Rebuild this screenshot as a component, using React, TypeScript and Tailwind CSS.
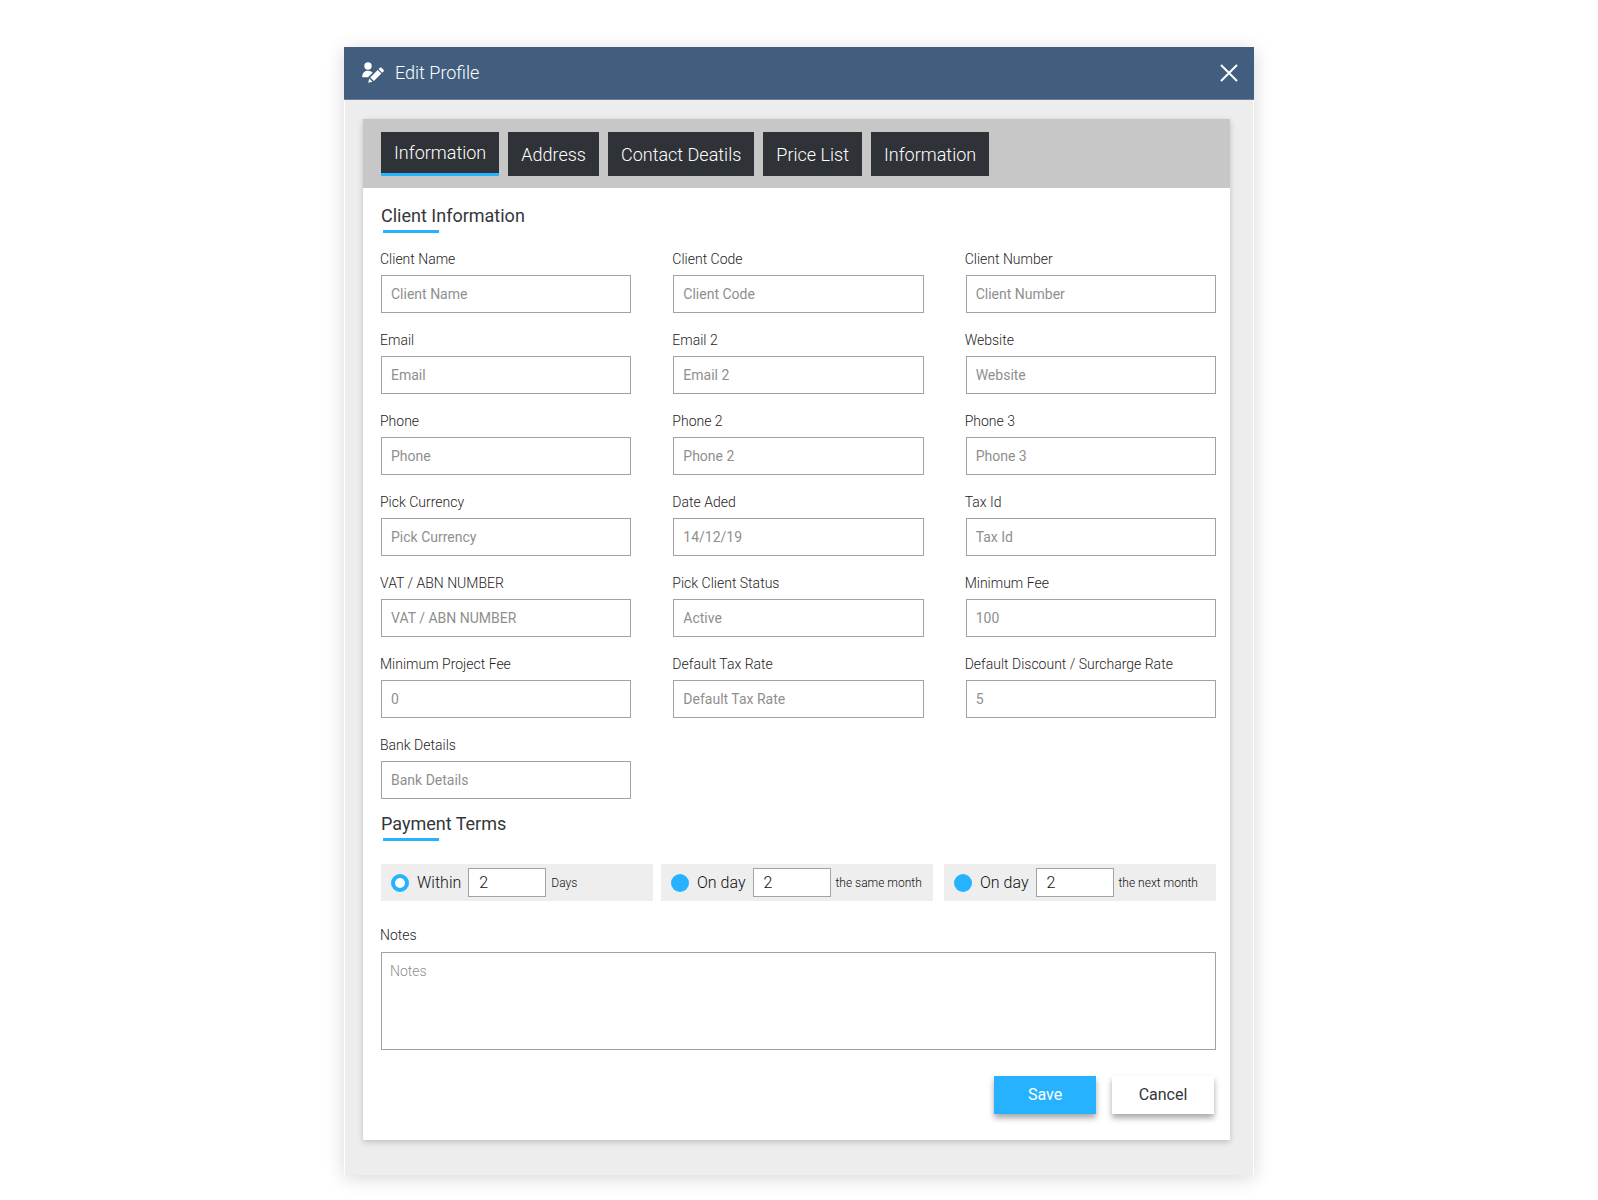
import { useState } from "react";

const tabs = ["Information", "Address", "Contact Deatils", "Price List", "Information"];

const fields = [
  ["Client Name", "Client Name"],
  ["Client Code", "Client Code"],
  ["Client Number", "Client Number"],
  ["Email", "Email"],
  ["Email 2", "Email 2"],
  ["Website", "Website"],
  ["Phone", "Phone"],
  ["Phone 2", "Phone 2"],
  ["Phone 3", "Phone 3"],
  ["Pick Currency", "Pick Currency"],
  ["Date Aded", "14/12/19"],
  ["Tax Id", "Tax Id"],
  ["VAT / ABN NUMBER", "VAT / ABN NUMBER"],
  ["Pick Client Status", "Active"],
  ["Minimum Fee", "100"],
  ["Minimum Project Fee", "0"],
  ["Default Tax Rate", "Default Tax Rate"],
  ["Default Discount / Surcharge Rate", "5"],
  ["Bank Details", "Bank Details"],
];

const terms = [
  { label: "Within", suffix: "Days" },
  { label: "On day", suffix: "the same month" },
  { label: "On day", suffix: "the next month" },
];

function EditProfileIcon() {
  return (
    <svg viewBox="0 0 22 22" className="h-[22px] w-[22px]" fill="currentColor" aria-hidden="true">
      <circle cx="6" cy="4" r="3.7" />
      <path d="M0.2 15.2C0.2 11.2 2.4 8.8 5.6 8.8c2.2 0 3.9.7 5 1.9l-4.6 4.5z" />
      <path d="M8.2 15.4l7.5-7.5 3.7 3.7-7.5 7.5z" />
      <path d="M16.5 7.1l1.3-1.3q.9-.8 1.8 0l1.9 1.9q.8.9 0 1.8l-1.3 1.3z" />
      <path d="M7.3 16.6l3.1 3.1-4.2 1.1z" />
    </svg>
  );
}

function SectionTitle({ children }: { children: string }) {
  return (
    <h2 className="text-lg leading-6 text-[#33363a]">
      {children}
      <span className="ml-0.5 mt-0.5 block h-[3px] w-[56px] bg-[#27b2ff]" />
    </h2>
  );
}

function Field({ id, label, placeholder }: { id: string; label: string; placeholder: string }) {
  return (
    <div>
      <label htmlFor={id} className="-ml-px block text-sm font-light leading-5 text-[#1f2225]">
        {label}
      </label>
      <input
        id={id}
        type="text"
        placeholder={placeholder}
        className="mt-1.5 block h-[38px] w-full border border-[#a3a3a3] bg-white px-[9px] text-sm text-[#333] outline-none placeholder:text-[#8f8f8f]"
      />
    </div>
  );
}

export default function App() {
  const [tab, setTab] = useState(0);
  const [term, setTerm] = useState(0);

  return (
    <main className="min-h-screen bg-white px-4 pb-6 pt-[47px] font-['Roboto',sans-serif]">
      <section className="mx-auto max-w-[910px] bg-[#ededed] shadow-[0_3px_18px_rgba(0,0,0,0.16)]">
        <header className="flex h-[53px] items-center border-b border-[#6a7f98] bg-[#425e7e] pl-[18px] pr-4 text-white">
          <EditProfileIcon />
          <h1 className="ml-[11px] text-lg font-light">Edit Profile</h1>
          <button type="button" aria-label="Close" className="ml-auto">
            <svg viewBox="0 0 18 18" className="h-[18px] w-[18px]" stroke="currentColor" strokeWidth="2" aria-hidden="true">
              <path d="M1 1l16 16M17 1L1 17" />
            </svg>
          </button>
        </header>

        <div className="border-x border-white pb-[35px] pl-[18px] pr-[23px] pt-[19px]">
          <form className="bg-white shadow-[0_2px_6px_rgba(0,0,0,0.2)]" onSubmit={(e) => e.preventDefault()}>
            <nav className="flex flex-wrap gap-[9px] bg-[#c7c7c7] px-[18px] pb-3 pt-[13px]">
              {tabs.map((name, i) => (
                <button
                  key={i}
                  type="button"
                  onClick={() => setTab(i)}
                  className={
                    "h-11 bg-[#2f3236] px-[13px] text-lg font-light text-white " +
                    (i === tab ? "border-b-[3px] border-[#27b2ff]" : "pt-0.5")
                  }
                >
                  {name}
                </button>
              ))}
            </nav>

            <div className="pb-[26px] pl-[18px] pr-[14px] pt-4">
              <SectionTitle>Client Information</SectionTitle>

              <div className="mt-4 grid grid-cols-3 gap-x-[42px] gap-y-[17px]">
                {fields.map(([label, placeholder], i) => (
                  <Field key={i} id={"field-" + i} label={label} placeholder={placeholder} />
                ))}
              </div>

              <div className="mt-[13px]">
                <SectionTitle>Payment Terms</SectionTitle>
              </div>

              <div className="mt-[23px] flex gap-2">
                {terms.map((t, i) => (
                  <div key={i} className="flex h-[37px] w-[272px] items-center bg-[#eeeeee] pl-[10px] last:ml-auto">
                    <input
                      id={"term-" + i}
                      type="radio"
                      name="term"
                      checked={i === term}
                      onChange={() => setTerm(i)}
                      className="h-[18px] w-[18px] shrink-0 appearance-none rounded-full bg-[#27b2ff] checked:border-4 checked:border-[#27b2ff] checked:bg-white"
                    />
                    <label htmlFor={"term-" + i} className="ml-2 whitespace-nowrap font-light text-[#111]">
                      {t.label}
                    </label>
                    <input
                      type="text"
                      defaultValue="2"
                      aria-label={t.label + " " + t.suffix}
                      className="ml-[7px] h-[29px] w-[78px] border border-[#a3a3a3] bg-white px-2.5 font-light text-[#111] outline-none"
                    />
                    <span className="ml-[5px] whitespace-nowrap text-xs font-light text-[#111]">{t.suffix}</span>
                  </div>
                ))}
              </div>

              <label htmlFor="notes" className="-ml-px mt-6 block text-sm font-light leading-5 text-[#1f2225]">
                Notes
              </label>
              <textarea
                id="notes"
                placeholder="Notes"
                className="mt-[7px] block h-[98px] w-full resize-none border border-[#a3a3a3] px-2 py-2 text-sm font-light text-[#333] outline-none placeholder:text-[#8f8f8f]"
              />

              <div className="mt-[26px] flex justify-end gap-4 pr-0.5">
                <button type="submit" className="h-[38px] w-[102px] bg-[#27b2ff] text-base text-white shadow-[0_4px_6px_rgba(0,0,0,0.35)]">
                  Save
                </button>
                <button type="button" className="h-[38px] w-[102px] bg-white text-base text-[#33363a] shadow-[0_4px_6px_rgba(0,0,0,0.35)]">
                  Cancel
                </button>
              </div>
            </div>
          </form>
        </div>
      </section>
    </main>
  );
}
